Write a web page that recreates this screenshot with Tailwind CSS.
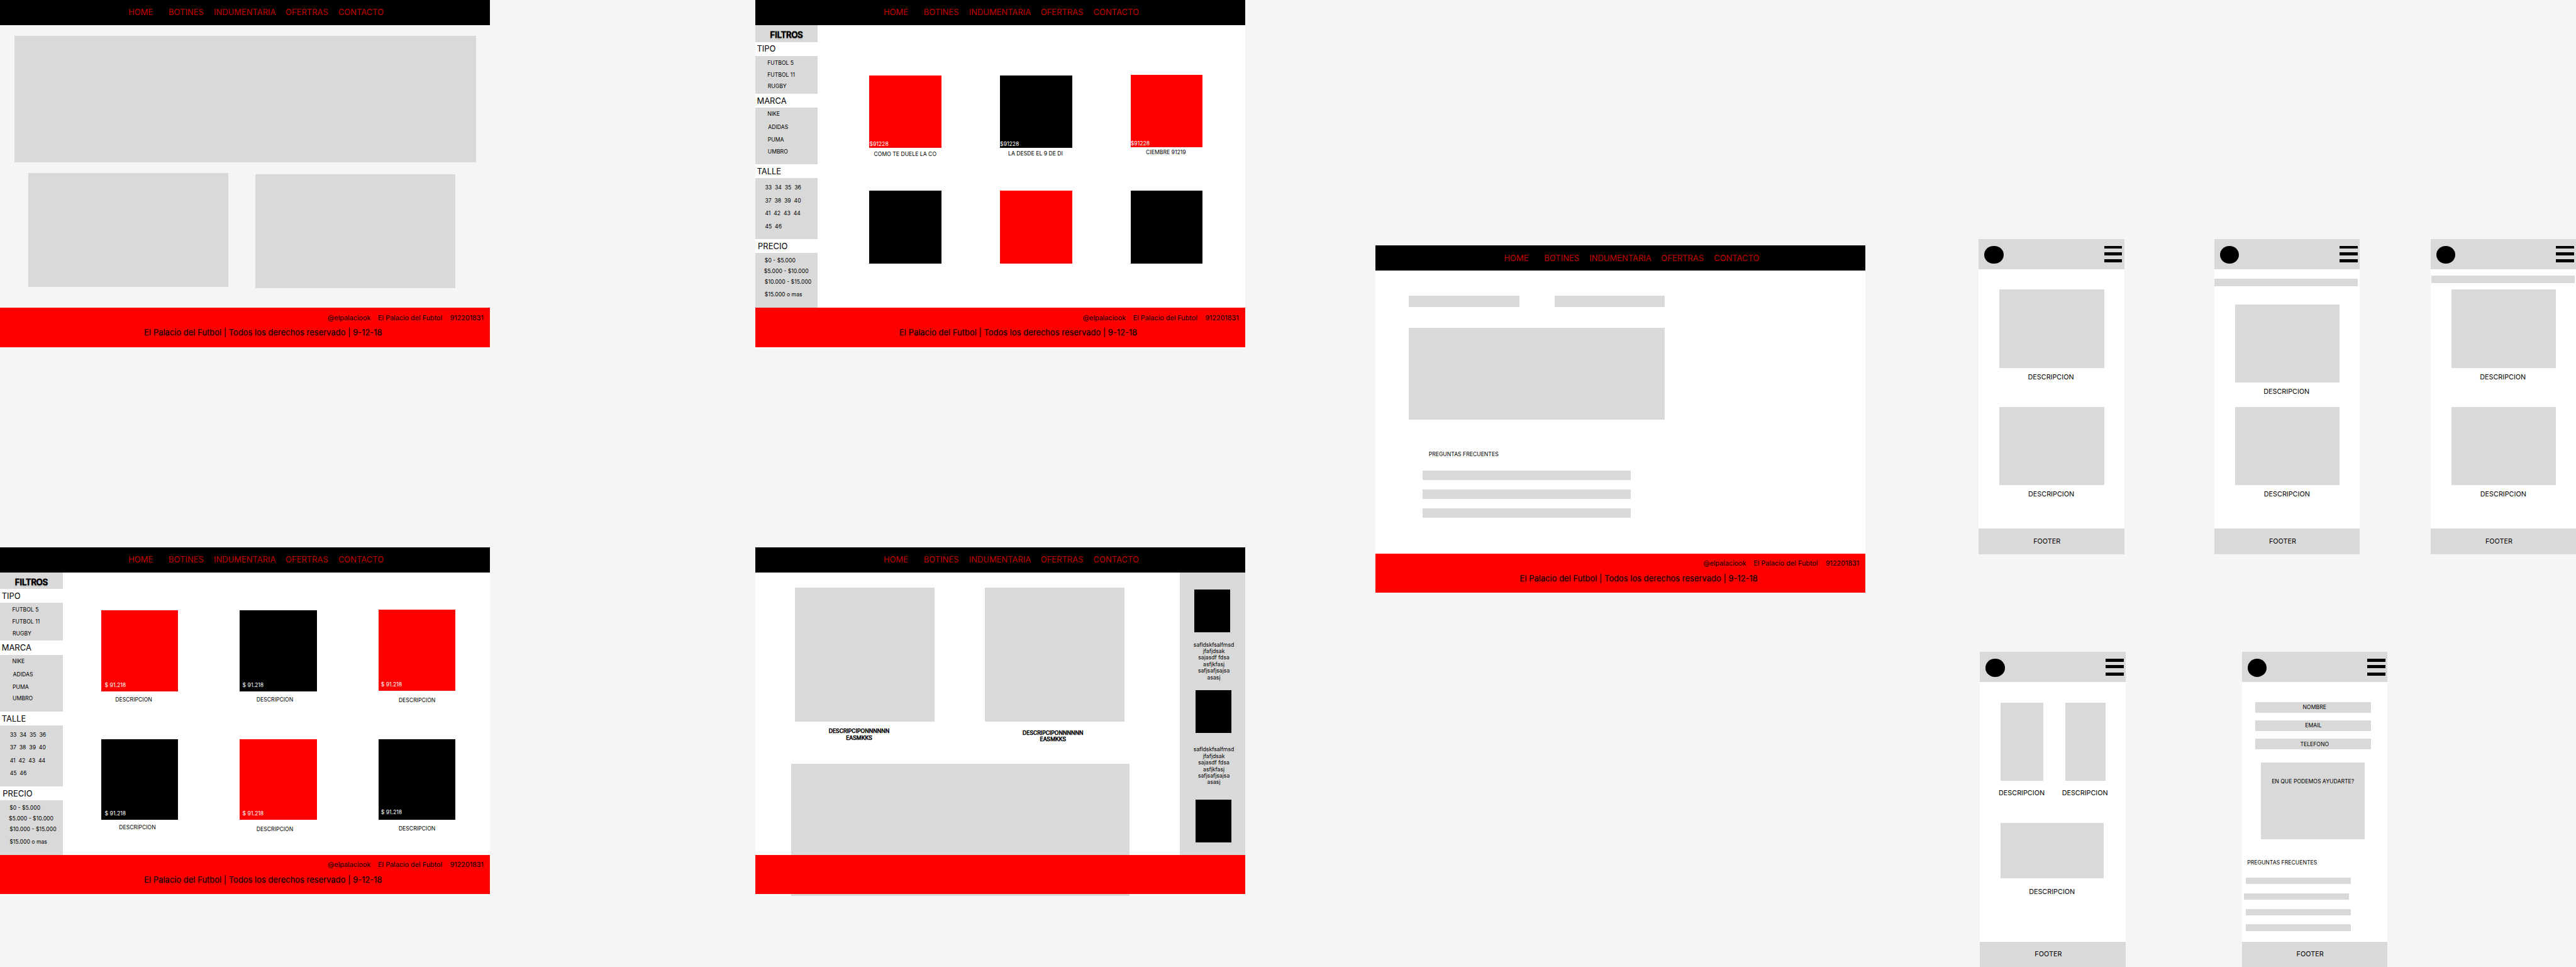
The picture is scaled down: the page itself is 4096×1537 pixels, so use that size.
<!DOCTYPE html>
<html lang="es" class="text-[8.6539px]">
<head>
<meta charset="utf-8">
<title>El Palacio del Futbol - Wireframes</title>
<script src="https://cdn.jsdelivr.net/npm/@tailwindcss/browser@4"></script>
</head>
<body class="relative h-[1537px] w-[4096px] overflow-hidden bg-[#f5f5f5] font-['Inter',sans-serif] text-base leading-5 whitespace-nowrap text-black">

<!-- Inicio -->
<section class="absolute top-0 left-0 flex h-256 w-360 flex-col">
  <nav class="flex h-18.5 shrink-0 items-center bg-black pl-[23.6rem] text-2xl leading-7 text-[#c40000]">
    <span class="w-29.5">HOME</span><span class="w-33.25">BOTINES</span><span class="w-52.75">INDUMENTARIA</span><span class="w-38.75">OFERTRAS</span><span>CONTACTO</span>
  </nav>
  <main class="h-[51.9375rem] pt-7.75">
    <div class="ml-10.5 h-93 w-[84.85rem] bg-[#d9d9d9]"></div>
    <div class="mt-7.75 ml-21 flex gap-19.75">
      <div class="h-83.75 w-147 bg-[#d9d9d9]"></div>
      <div class="mt-1 h-83.75 w-147 bg-[#d9d9d9]"></div>
    </div>
  </main>
  <footer class="h-28.75 bg-[#ff0000] pt-4.25">
    <div class="flex pl-[60.2rem] text-xl leading-6"><span class="w-37">@elpalaciook</span><span class="w-53">El Palacio del Fubtol</span><span>912201831</span></div>
    <p class="mt-4.5 pl-106 text-2xl leading-7 text-shadow-[0_0.25rem_0.25rem_rgb(0_0_0/0.25)]">El Palacio del Futbol | Todos los derechos reservado | 9-12-18</p>
  </footer>
</section>

<!-- Botines -->
<section class="absolute top-0 left-555 flex h-256 w-360 flex-col bg-white">
  <nav class="flex h-18.5 shrink-0 items-center bg-black pl-[23.6rem] text-2xl leading-7 text-[#c40000]">
    <span class="w-29.5">HOME</span><span class="w-33.25">BOTINES</span><span class="w-52.75">INDUMENTARIA</span><span class="w-38.75">OFERTRAS</span><span>CONTACTO</span>
  </nav>
  <div class="flex h-[51.9375rem]">
    <aside class="w-46 shrink-0">
      <h2 class="h-12.25 bg-[#d9d9d9] pt-3.75 pl-11 text-2xl leading-7 [-webkit-text-stroke:0.125rem_#000] text-shadow-[0_0.25rem_0.25rem_rgb(0_0_0/0.25)]">FILTROS</h2>
      <h3 class="h-10.25 pt-1.75 pl-1.25 text-2xl leading-7">TIPO</h3>
      <ul class="flex h-27.75 flex-col gap-3.75 bg-[#d9d9d9] pt-2.75 pl-9">
        <li>FUTBOL 5</li><li>FUTBOL 11</li><li class="pl-0.25">RUGBY</li>
      </ul>
      <h3 class="h-10.25 pt-1.75 pl-1.25 text-2xl leading-7">MARCA</h3>
      <ul class="h-41.75 bg-[#d9d9d9] pt-2.5 pl-9">
        <li>NIKE</li><li class="mt-4.75 pl-0.5">ADIDAS</li><li class="mt-4 pl-0.25">PUMA</li><li class="mt-3.75 pl-0.25">UMBRO</li>
      </ul>
      <h3 class="h-10.25 pt-1.75 pl-1.25 text-2xl leading-7">TALLE</h3>
      <ul class="flex h-44.75 flex-col gap-4.5 bg-[#d9d9d9] pt-4.5 pl-7.25 whitespace-pre">
        <li>33  34  35  36</li><li>37  38  39  40</li><li>41  42  43  44</li><li>45  46</li>
      </ul>
      <h3 class="h-10.25 pt-1.75 pl-2 text-2xl leading-7">PRECIO</h3>
      <ul class="h-40.25 bg-[#d9d9d9] pt-3 pl-7">
        <li>$0 - $5.000</li><li class="mt-3 -ml-0.5">$5.000 - $10.000</li><li class="mt-3">$10.000 - $15.000</li><li class="mt-4">$15.000 o mas</li>
      </ul>
    </aside>
    <div class="ml-38 grid grid-cols-[repeat(3,13.25rem)] grid-rows-[repeat(2,21.1875rem)] gap-x-43 pt-37">
      <article>
        <div class="flex h-53.25 items-end bg-[#ff0000] pb-0.25 text-white">$91228</div>
        <p class="pt-2.25 pl-3.25">COMO TE DUELE LA CO</p>
      </article>
      <article>
        <div class="flex h-53.25 items-end bg-black pb-0.25 text-white">$91228</div>
        <p class="pt-1.5 pl-6">LA DESDE EL 9 DE DI</p>
      </article>
      <article class="-mt-0.5">
        <div class="flex h-53.25 items-end bg-[#ff0000] text-white">$91228</div>
        <p class="pt-1.5 pl-11.25">CIEMBRE 91219</p>
      </article>
      <div class="h-53.25 bg-black"></div>
      <div class="h-53.25 bg-[#ff0000]"></div>
      <div class="h-53.25 bg-black"></div>
    </div>
  </div>
  <footer class="h-28.75 bg-[#ff0000] pt-4.25">
    <div class="flex pl-[60.2rem] text-xl leading-6"><span class="w-37">@elpalaciook</span><span class="w-53">El Palacio del Fubtol</span><span>912201831</span></div>
    <p class="mt-4.5 pl-106 text-2xl leading-7 text-shadow-[0_0.25rem_0.25rem_rgb(0_0_0/0.25)]">El Palacio del Futbol | Todos los derechos reservado | 9-12-18</p>
  </footer>
</section>

<!-- Indumentaria -->
<section class="absolute top-402 left-0 flex h-256 w-360 flex-col bg-white">
  <nav class="flex h-18.5 shrink-0 items-center bg-black pl-[23.6rem] text-2xl leading-7 text-[#c40000]">
    <span class="w-29.5">HOME</span><span class="w-33.25">BOTINES</span><span class="w-52.75">INDUMENTARIA</span><span class="w-38.75">OFERTRAS</span><span>CONTACTO</span>
  </nav>
  <div class="flex h-[51.9375rem]">
    <aside class="w-46 shrink-0">
      <h2 class="h-12.25 bg-[#d9d9d9] pt-3.75 pl-11 text-2xl leading-7 [-webkit-text-stroke:0.125rem_#000] text-shadow-[0_0.25rem_0.25rem_rgb(0_0_0/0.25)]">FILTROS</h2>
      <h3 class="h-10.25 pt-1.75 pl-1.25 text-2xl leading-7">TIPO</h3>
      <ul class="flex h-27.75 flex-col gap-3.75 bg-[#d9d9d9] pt-2.75 pl-9">
        <li>FUTBOL 5</li><li>FUTBOL 11</li><li class="pl-0.25">RUGBY</li>
      </ul>
      <h3 class="h-10.25 pt-1.75 pl-1.25 text-2xl leading-7">MARCA</h3>
      <ul class="h-41.75 bg-[#d9d9d9] pt-2.5 pl-9">
        <li>NIKE</li><li class="mt-4.75 pl-0.5">ADIDAS</li><li class="mt-4 pl-0.25">PUMA</li><li class="mt-3.75 pl-0.25">UMBRO</li>
      </ul>
      <h3 class="h-10.25 pt-1.75 pl-1.25 text-2xl leading-7">TALLE</h3>
      <ul class="flex h-44.75 flex-col gap-4.5 bg-[#d9d9d9] pt-4.5 pl-7.25 whitespace-pre">
        <li>33  34  35  36</li><li>37  38  39  40</li><li>41  42  43  44</li><li>45  46</li>
      </ul>
      <h3 class="h-10.25 pt-1.75 pl-2 text-2xl leading-7">PRECIO</h3>
      <ul class="h-40.25 bg-[#d9d9d9] pt-3 pl-7">
        <li>$0 - $5.000</li><li class="mt-3 -ml-0.5">$5.000 - $10.000</li><li class="mt-3">$10.000 - $15.000</li><li class="mt-4">$15.000 o mas</li>
      </ul>
    </aside>
    <div class="ml-28.25 grid grid-cols-[repeat(3,14.125rem)] grid-rows-[repeat(2,23.6rem)] gap-x-45.5 pt-28">
      <article>
        <div class="flex h-59.5 items-end bg-[#ff0000] pb-2 pl-2.75 text-white">$ 91.218</div>
        <p class="pt-3.75 pl-10.5">DESCRIPCION</p>
      </article>
      <article>
        <div class="flex h-59.5 items-end bg-black pb-2 pl-2 text-white">$ 91.218</div>
        <p class="pt-3.75 pl-12.25">DESCRIPCION</p>
      </article>
      <article class="-mt-0.5">
        <div class="flex h-59.5 items-end bg-[#ff0000] pb-2 pl-1.75 text-white">$ 91.218</div>
        <p class="pt-4.5 pl-14.75">DESCRIPCION</p>
      </article>
      <article>
        <div class="flex h-59.5 items-end bg-black pb-2 pl-2.75 text-white">$ 91.218</div>
        <p class="pt-3 pl-13.25">DESCRIPCION</p>
      </article>
      <article>
        <div class="flex h-59.5 items-end bg-[#ff0000] pb-2 pl-2 text-white">$ 91.218</div>
        <p class="pt-4.5 pl-12.25">DESCRIPCION</p>
      </article>
      <article>
        <div class="flex h-59.5 items-end bg-black pb-3 pl-1.75 text-white">$ 91.218</div>
        <p class="pt-4 pl-14.75">DESCRIPCION</p>
      </article>
    </div>
  </div>
  <footer class="h-28.75 bg-[#ff0000] pt-4.25">
    <div class="flex pl-[60.2rem] text-xl leading-6"><span class="w-37">@elpalaciook</span><span class="w-53">El Palacio del Fubtol</span><span>912201831</span></div>
    <p class="mt-4.5 pl-106 text-2xl leading-7 text-shadow-[0_0.25rem_0.25rem_rgb(0_0_0/0.25)]">El Palacio del Futbol | Todos los derechos reservado | 9-12-18</p>
  </footer>
</section>

<!-- Ofertas -->
<section class="absolute top-402 left-555 flex h-256 w-360 flex-col bg-white">
  <nav class="flex h-18.5 shrink-0 items-center bg-black pl-[23.6rem] text-2xl leading-7 text-[#c40000]">
    <span class="w-29.5">HOME</span><span class="w-33.25">BOTINES</span><span class="w-52.75">INDUMENTARIA</span><span class="w-38.75">OFERTRAS</span><span>CONTACTO</span>
  </nav>
  <div class="flex grow justify-between">
    <main class="flex flex-col pt-11.25 pl-26.25">
      <div class="flex gap-37 pl-3 text-center leading-[1.21rem]">
        <article class="w-102.75">
          <div class="h-98.25 bg-[#d9d9d9]"></div>
          <p class="pt-5 pr-8.5 [-webkit-text-stroke:0.0625rem_#000]">DESCRIPCIPONNNNNN<br>EASMKKS</p>
        </article>
        <article class="w-102.5">
          <div class="h-98.25 bg-[#d9d9d9]"></div>
          <p class="pt-6 pr-2.75 [-webkit-text-stroke:0.0625rem_#000]">DESCRIPCIPONNNNNN<br>EASMKKS</p>
        </article>
      </div>
      <div class="mt-auto h-[24.2rem] w-249 bg-[#d9d9d9]"></div>
    </main>
    <aside class="mb-29.75 w-48 bg-[#d9d9d9] pt-12.75 text-center leading-[1.21rem]">
      <div class="ml-10.75 h-31.5 w-26.5 bg-black"></div>
      <p class="mt-6.5 ml-2.25">safldskfsalfmsd<br>jfafjdsak<br>sajasdf fdsa<br>asfjkfasj<br>safjsafjsajsa<br>asasj</p>
      <div class="mt-6.75 ml-11.75 h-31.5 w-26.5 bg-black"></div>
      <p class="mt-9.75 ml-2.25">safldskfsalfmsd<br>jfafjdsak<br>sajasdf fdsa<br>asfjkfasj<br>safjsafjsajsa<br>asasj</p>
      <div class="mt-10.25 ml-11.75 h-31.5 w-26.5 bg-black"></div>
    </aside>
  </div>
  <footer class="absolute bottom-1 left-0 h-28.75 w-full bg-[#ff0000]"></footer>
</section>

<!-- Contacto -->
<section class="absolute top-[45.1rem] left-1011 flex h-256 w-360 flex-col bg-white">
  <nav class="flex h-18.5 shrink-0 items-center bg-black pl-[23.6rem] text-2xl leading-7 text-[#c40000]">
    <span class="w-29.5">HOME</span><span class="w-33.25">BOTINES</span><span class="w-52.75">INDUMENTARIA</span><span class="w-38.75">OFERTRAS</span><span>CONTACTO</span>
  </nav>
  <main class="h-[51.9375rem] pt-18.5 pl-24.5">
    <div class="flex w-188 justify-between">
      <div class="h-8.25 w-81 bg-[#d9d9d9]"></div>
      <div class="h-8.25 w-81 bg-[#d9d9d9]"></div>
    </div>
    <div class="mt-15.25 h-67.5 w-188 bg-[#d9d9d9]"></div>
    <p class="mt-23.25 pl-14.5">PREGUNTAS FRECUENTES</p>
    <div class="mt-9 ml-10 flex w-153.25 flex-col gap-7">
      <div class="h-7 bg-[#d9d9d9]"></div>
      <div class="h-7 bg-[#d9d9d9]"></div>
      <div class="h-7 bg-[#d9d9d9]"></div>
    </div>
  </main>
  <footer class="h-28.75 bg-[#ff0000] pt-4.25">
    <div class="flex pl-[60.2rem] text-xl leading-6"><span class="w-37">@elpalaciook</span><span class="w-53">El Palacio del Fubtol</span><span>912201831</span></div>
    <p class="mt-4.5 pl-106 text-2xl leading-7 text-shadow-[0_0.25rem_0.25rem_rgb(0_0_0/0.25)]">El Palacio del Futbol | Todos los derechos reservado | 9-12-18</p>
  </footer>
</section>

<!-- Movil: inicio -->
<section class="absolute top-175.5 left-[363.55rem] flex h-231.5 w-107 flex-col bg-white text-xl leading-6">
  <header class="flex h-22.25 items-start justify-between bg-[#d9d9d9] pt-5 pr-1.5 pl-4.25">
    <div class="h-13.25 w-14 rounded-[50%] bg-black"></div>
    <div class="w-13.25">
      <div class="h-2.25 bg-black"></div><div class="mt-2.5 h-2.25 bg-black"></div><div class="mt-3 h-2.25 bg-black"></div>
    </div>
  </header>
  <main class="pt-15 pl-15.25">
    <div class="h-57.5 w-77 bg-[#d9d9d9]"></div>
    <p class="pt-3.75 pl-21">DESCRIPCION</p>
    <div class="mt-19 h-57.5 w-77 bg-[#d9d9d9]"></div>
    <p class="pt-3.5 pl-21.25">DESCRIPCION</p>
  </main>
  <footer class="mt-auto flex h-18.75 items-center bg-[#d9d9d9] pl-40.25">FOOTER</footer>
</section>

<!-- Movil: buscador -->
<section class="absolute top-175.5 left-[406.85rem] flex h-231.5 w-107 flex-col bg-white text-xl leading-6">
  <header class="flex h-22.25 items-start justify-between bg-[#d9d9d9] pt-5 pr-1.5 pl-4.25">
    <div class="h-13.25 w-14 rounded-[50%] bg-black"></div>
    <div class="w-13.25">
      <div class="h-2.25 bg-black"></div><div class="mt-2.5 h-2.25 bg-black"></div><div class="mt-3 h-2.25 bg-black"></div>
    </div>
  </header>
  <div class="mt-7 h-5.5 w-105.5 bg-[#d9d9d9]"></div>
  <main class="pt-13.5 pl-15.25">
    <div class="h-57.5 w-77 bg-[#d9d9d9]"></div>
    <p class="pt-3.5 pl-21">DESCRIPCION</p>
    <div class="mt-8.25 h-57.5 w-77 bg-[#d9d9d9]"></div>
    <p class="pt-3.5 pl-21.25">DESCRIPCION</p>
  </main>
  <footer class="mt-auto flex h-18.75 items-center bg-[#d9d9d9] pl-40.25">FOOTER</footer>
</section>

<!-- Movil: menu -->
<section class="absolute top-175.5 left-[446.6rem] flex h-231.5 w-107 flex-col bg-white text-xl leading-6">
  <header class="flex h-22.25 items-start justify-between bg-[#d9d9d9] pt-5 pr-1.5 pl-4.25">
    <div class="h-13.25 w-14 rounded-[50%] bg-black"></div>
    <div class="w-13.25">
      <div class="h-2.25 bg-black"></div><div class="mt-2.5 h-2.25 bg-black"></div><div class="mt-3 h-2.25 bg-black"></div>
    </div>
  </header>
  <div class="mt-4.75 ml-0.5 h-5.5 w-105.5 bg-[#d9d9d9]"></div>
  <main class="pt-4.75 pl-15.25">
    <div class="h-57.5 w-77 bg-[#d9d9d9]"></div>
    <p class="pt-3.75 pl-21">DESCRIPCION</p>
    <div class="mt-19 h-57.5 w-77 bg-[#d9d9d9]"></div>
    <p class="pt-3.5 pl-21.25">DESCRIPCION</p>
  </main>
  <footer class="mt-auto flex h-18.75 items-center bg-[#d9d9d9] pl-40.25">FOOTER</footer>
</section>

<!-- Movil: productos -->
<section class="absolute top-479 left-[363.8rem] flex h-231.5 w-107 flex-col bg-white text-xl leading-6">
  <header class="flex h-22.25 items-start justify-between bg-[#d9d9d9] pt-5 pr-1.5 pl-4.25">
    <div class="h-13.25 w-14 rounded-[50%] bg-black"></div>
    <div class="w-13.25">
      <div class="h-2.25 bg-black"></div><div class="mt-2.5 h-2.25 bg-black"></div><div class="mt-3 h-2.25 bg-black"></div>
    </div>
  </header>
  <main class="pt-15 pl-15.25">
    <div class="flex gap-16">
      <div class="h-57.5 w-31.5 bg-[#d9d9d9]"></div>
      <div class="h-57.5 w-29.5 bg-[#d9d9d9]"></div>
    </div>
    <div class="-ml-1.5 flex pt-5.75">
      <p class="w-46.5">DESCRIPCION</p>
      <p>DESCRIPCION</p>
    </div>
    <div class="mt-19.25 h-40.5 w-75.5 bg-[#d9d9d9]"></div>
    <p class="pt-7 pl-20.75">DESCRIPCION</p>
  </main>
  <footer class="mt-auto flex h-18.75 items-center bg-[#d9d9d9] pl-40.25">FOOTER</footer>
</section>

<!-- Movil: contacto -->
<section class="absolute top-479 left-[411.9rem] flex h-231.5 w-107 flex-col bg-white">
  <header class="flex h-22.25 items-start justify-between bg-[#d9d9d9] pt-5 pr-1.5 pl-4.25">
    <div class="h-13.25 w-14 rounded-[50%] bg-black"></div>
    <div class="w-13.25">
      <div class="h-2.25 bg-black"></div><div class="mt-2.5 h-2.25 bg-black"></div><div class="mt-3 h-2.25 bg-black"></div>
    </div>
  </header>
  <main class="pt-14.5">
    <div class="ml-10 flex w-85 flex-col gap-5.5 text-center">
      <div class="h-8 bg-[#d9d9d9] pt-1.5 pl-2">NOMBRE</div>
      <div class="h-8 bg-[#d9d9d9] pt-1.5 pl-0.25">EMAIL</div>
      <div class="h-8 bg-[#d9d9d9] pt-1.75 pl-2">TELEFONO</div>
    </div>
    <div class="mt-9.5 ml-14.25 h-56.25 w-76.25 bg-[#d9d9d9] pt-11.5 pl-7.75">EN QUE PODEMOS AYUDARTE?</div>
    <p class="pt-15 pl-4">PREGUNTAS FRECUENTES</p>
    <div class="mt-8.25 ml-3 flex w-77 flex-col gap-6.75">
      <div class="h-4.75 bg-[#d9d9d9]"></div>
      <div class="-ml-1.25 h-4.75 w-77 bg-[#d9d9d9]"></div>
      <div class="h-4.75 bg-[#d9d9d9]"></div>
      <div class="h-4.75 bg-[#d9d9d9]"></div>
    </div>
  </main>
  <footer class="mt-auto flex h-18.75 items-center bg-[#d9d9d9] pl-40.25 text-xl leading-6">FOOTER</footer>
</section>

</body>
</html>
